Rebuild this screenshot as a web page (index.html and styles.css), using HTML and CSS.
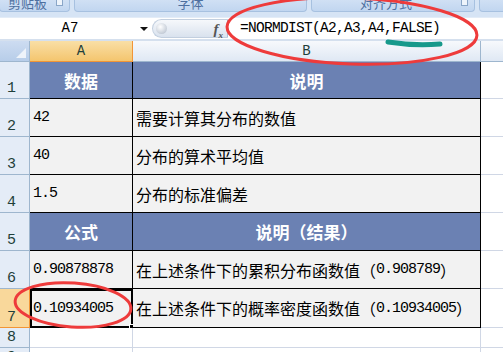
FILE: index.html
```html
<!DOCTYPE html>
<html lang="zh-CN">
<head>
    <meta charset="UTF-8">
    <title>NORMDIST</title>
    <link rel="stylesheet" href="styles.css">
</head>
<body>
    <div class="ribbon">
        <div class="group g-clip"><span>剪贴板</span><i class="launcher"></i></div>
        <div class="group g-font"><span>字体</span></div>
        <div class="group g-align"><span>对齐方式</span><i class="launcher"></i></div>
        <div class="group g-more"></div>
    </div>
    <div class="formula-bar">
        <div class="name-box"><span>A7</span><i class="arrow"></i></div>
        <div class="splitter"><i class="knob"></i><span class="fx">f<sub>x</sub></span></div>
        <div class="formula">=NORMDIST(A2,A3,A4,FALSE)</div>
    </div>
    <div class="gap"></div>
    <div class="sheet">
        <div class="corner"></div>
        <div class="col-head active">A</div>
        <div class="col-head">B</div>
        <div class="col-head last"></div>

        <div class="row-head">1</div>
        <div class="cell title">数据</div>
        <div class="cell title">说明</div>
        <div class="cell blank"></div>

        <div class="row-head">2</div>
        <div class="cell"><span class="num">42</span></div>
        <div class="cell">需要计算其分布的数值</div>
        <div class="cell blank"></div>

        <div class="row-head">3</div>
        <div class="cell"><span class="num">40</span></div>
        <div class="cell">分布的算术平均值</div>
        <div class="cell blank"></div>

        <div class="row-head">4</div>
        <div class="cell"><span class="num">1.5</span></div>
        <div class="cell">分布的标准偏差</div>
        <div class="cell blank"></div>

        <div class="row-head">5</div>
        <div class="cell title">公式</div>
        <div class="cell title">说明（结果）</div>
        <div class="cell blank"></div>

        <div class="row-head">6</div>
        <div class="cell"><span class="num">0.90878878</span></div>
        <div class="cell">在上述条件下的累积分布函数值（<span class="num">0.908789</span>）</div>
        <div class="cell blank"></div>

        <div class="row-head active">7</div>
        <div class="cell selected"><span class="num">0.10934005</span></div>
        <div class="cell">在上述条件下的概率密度函数值（<span class="num">0.10934005</span>）</div>
        <div class="cell blank"></div>

        <div class="row-head">8</div>
        <div class="cell empty"></div>
        <div class="cell empty"></div>
        <div class="cell blank"></div>

        <div class="row-head">9</div>
        <div class="cell empty"></div>
        <div class="cell empty"></div>
        <div class="cell blank"></div>
    </div>

    <svg class="marks" width="503" height="352" viewBox="0 0 503 352">
        <ellipse cx="352" cy="31" rx="125" ry="33" transform="rotate(2 352 31)" fill="none" stroke="#ee3b3b" stroke-width="3"/>
        <path d="M388 42 Q414 46 440 44" fill="none" stroke="#17998b" stroke-width="5" stroke-linecap="round"/>
        <ellipse cx="73" cy="305" rx="58" ry="22" transform="rotate(4 73 305)" fill="none" stroke="#ee3b3b" stroke-width="3"/>
    </svg>
</body>
</html>
```

FILE: styles.css
```css
:root {
  --ribbon-bg: #c9dbf1;
  --head-line: #9eb6ce;
  --grid-line: #d0d7e5;
  --title-bg: #6b81b3;
  --cell-bg: #f2f2f2;
  --sel-orange: #f29536;
}

body {
  margin: 0;
  width: 503px;
  height: 352px;
  overflow: hidden;
  position: relative;
  background: #ffffff;
  font-family: "Liberation Mono", "Noto Sans CJK SC", monospace;
  color: #000;
}

/* ribbon group labels, cut off at the top */
.ribbon {
  display: flex;
  gap: 4px;
  height: 17px;
  background: #d6e4f5;
  overflow: hidden;
}

.group {
  position: relative;
  height: 12px;
  box-sizing: border-box;
  background: linear-gradient(#d0e0f4, #c1d6f0);
  border: 1px solid #a7c1e0;
  border-top: none;
  border-radius: 0 0 4px 4px;
  text-align: center;
  overflow: hidden;
}

.group span {
  display: block;
  margin-top: -5px;
  font-family: "Noto Sans CJK SC", sans-serif;
  font-size: 13px;
  line-height: 15px;
  color: #4d6f9f;
}

.g-clip { width: 71px; margin-left: -1px; }
.g-clip span { text-align: left; padding-left: 8px; }
.g-font { width: 233px; }
.g-align { width: 164px; }
.g-align span { text-align: left; padding-left: 48px; }
.g-more { flex: 1; margin-right: -4px; }

.launcher {
  position: absolute;
  right: 6px;
  top: 0;
  width: 5px;
  height: 5px;
  border: 1px solid #8aa6c8;
  border-top: none;
  background: #eef4fb;
}

/* formula bar */
.formula-bar {
  display: flex;
  height: 21px;
  background: #fff;
  border-top: 1px solid #e3ecf7;
}

.name-box {
  position: relative;
  width: 152px;
  font-size: 14px;
  line-height: 21px;
}

.name-box span {
  display: block;
  width: 140px;
  text-align: center;
}

.arrow {
  position: absolute;
  right: 4px;
  top: 9px;
  border-left: 4px solid transparent;
  border-right: 4px solid transparent;
  border-top: 4px solid #111;
}

.splitter {
  position: relative;
  width: 76px;
  margin: 1px 0;
  border-radius: 10px 0 0 10px;
  background: linear-gradient(#f6f8fb, #d9e2ee);
  border: 1px solid #c2cfdf;
  border-right: 1px solid #a9bfd6;
  box-sizing: border-box;
}

.knob {
  position: absolute;
  left: 3px;
  top: 3px;
  width: 11px;
  height: 11px;
  border-radius: 50%;
  background: radial-gradient(circle at 40% 35%, #ffffff, #aeb9c8);
}

.fx {
  position: absolute;
  right: 4px;
  top: 0;
  font-family: "Liberation Serif", serif;
  font-style: italic;
  font-weight: bold;
  font-size: 15px;
  line-height: 18px;
  color: #555;
}

.fx sub {
  font-size: 9px;
}

.formula {
  flex: 1;
  padding-left: 12px;
  font-size: 14.5px;
  letter-spacing: -0.7px;
  line-height: 21px;
  white-space: nowrap;
}

.gap {
  height: 2px;
  background: #d5e0ee;
}

/* worksheet */
.sheet {
  display: grid;
  grid-template-columns: 30px 103px 348px 1fr;
  grid-template-rows: 21px 37px 38px 38px 38px 38px 38px 39px 20px 20px;
}

.corner {
  position: relative;
  background: linear-gradient(#cddcf1, #b7cde9);
  border-right: 1px solid var(--head-line);
  border-bottom: 1px solid var(--head-line);
}

.corner::after {
  content: "";
  position: absolute;
  right: 3px;
  bottom: 3px;
  border-left: 10px solid transparent;
  border-bottom: 10px solid #eef3fa;
}

.col-head {
  background: linear-gradient(#f7f9fc, #dfe8f4);
  border-right: 1px solid var(--head-line);
  border-bottom: 1px solid var(--head-line);
  text-align: center;
  font-size: 14px;
  line-height: 21px;
  color: #1f3f3a;
}

.col-head.active {
  background: linear-gradient(#f9dfa6, #f4c56e);
  border-right-color: var(--sel-orange);
  border-bottom-color: var(--sel-orange);
}

.col-head.last {
  border-right: none;
}

.row-head {
  background: #e4ecf7;
  border-right: 1px solid var(--head-line);
  border-bottom: 1px solid var(--head-line);
  display: flex;
  align-items: flex-end;
  padding-left: 7px;
  font-size: 15px;
  line-height: 19px;
  color: #1f3f3a;
}

.row-head.active {
  background: #f9d89b;
  border-right-color: var(--sel-orange);
  border-bottom-color: var(--sel-orange);
}

.cell {
  position: relative;
  background: var(--cell-bg);
  border-right: 1px solid #000;
  border-bottom: 1px solid #000;
  display: flex;
  align-items: center;
  padding-left: 3px;
  font-family: "Noto Sans CJK SC", sans-serif;
  font-size: 16px;
  white-space: nowrap;
  overflow: hidden;
}

.cell .num {
  font-family: "Liberation Mono", monospace;
  font-size: 15px;
  letter-spacing: -1px;
}

.cell.title {
  background: var(--title-bg);
  color: #fff;
  font-weight: bold;
  font-size: 17px;
  justify-content: center;
  padding-left: 0;
}

.cell.blank {
  background: #fff;
  border-right: none;
  border-bottom: 1px solid var(--grid-line);
}

.cell.empty {
  background: #fff;
  border-right: 1px solid var(--grid-line);
  border-bottom: 1px solid var(--grid-line);
}

.cell.selected {
  overflow: visible;
  outline: 2px solid #000;
  outline-offset: -2px;
}

.cell.selected::after {
  content: "";
  position: absolute;
  right: -4px;
  bottom: -4px;
  width: 5px;
  height: 5px;
  background: #000;
  border: 1px solid #fff;
}

.marks {
  position: absolute;
  top: 0;
  left: 0;
  pointer-events: none;
}
```
